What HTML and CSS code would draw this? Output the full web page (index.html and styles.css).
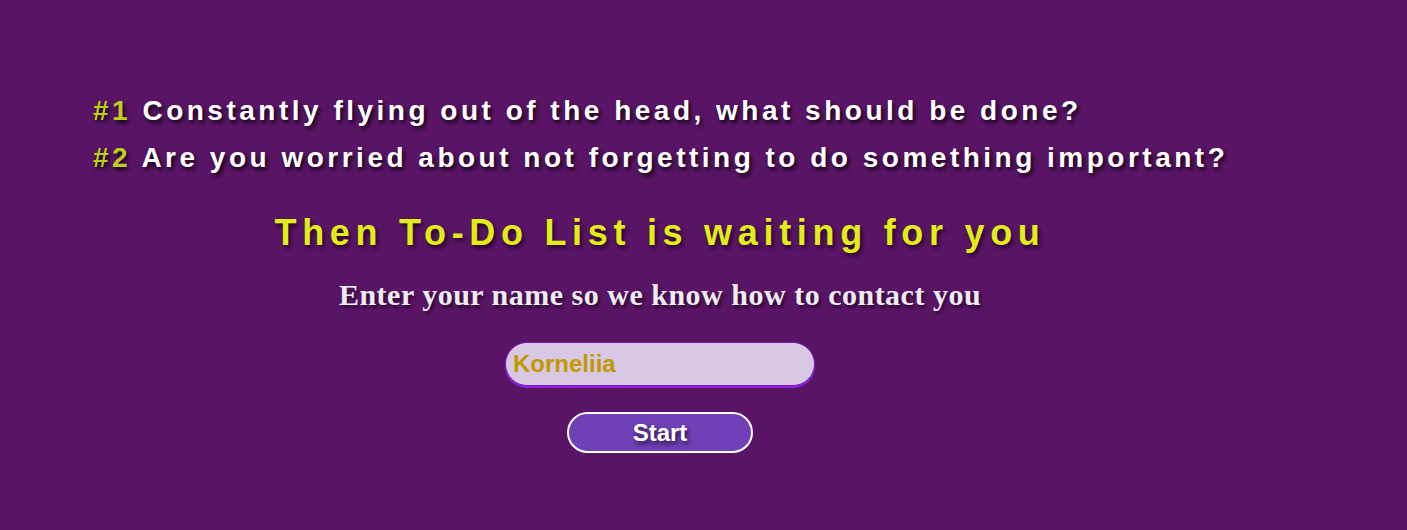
FILE: index.html
```html
<!DOCTYPE html>
<html lang="en">
<head>
<meta charset="utf-8">
<title>To-Do List</title>
<link rel="stylesheet" href="styles.css">
</head>
<body>
  <div class="questions">
    <p class="question"><span class="num">#1</span> Constantly flying out of the head, what should be done?</p>
    <p class="question"><span class="num">#2</span> Are you worried about not forgetting to do something important?</p>
  </div>
  <div class="main">
    <h1 class="title">Then To-Do List is waiting for you</h1>
    <h2 class="subtitle">Enter your name so we know how to contact you</h2>
    <input class="name-input" type="text" value="Korneliia">
    <button class="start-btn" type="button">Start</button>
  </div>
</body>
</html>
```
FILE: styles.css
```css
html, body {
  margin: 0;
  padding: 0;
}
body {
  background: #5a1466;
  font-family: "Liberation Sans", Arial, sans-serif;
  height: 530px;
  overflow: hidden;
}
.questions {
  padding: 87px 0 0 93px;
}
.question {
  margin: 0;
  font-size: 28px;
  line-height: 47px;
  font-weight: bold;
  letter-spacing: 3.5px;
  color: #ffffff;
  text-shadow: 2px 3px 4px rgba(0, 0, 0, 0.85);
  white-space: nowrap;
}
.num {
  color: #bccf1a;
}
.main {
  width: 1320px;
  display: flex;
  flex-direction: column;
  align-items: center;
  text-align: center;
}
.title {
  margin: 31px 0 0 0;
  font-size: 36px;
  line-height: normal;
  font-weight: bold;
  letter-spacing: 5.7px;
  color: #e2ec17;
  text-shadow: 2px 3px 4px rgba(20, 0, 30, 0.8);
  white-space: nowrap;
}
.subtitle {
  margin: 24px 0 0 0;
  font-family: "Liberation Serif", "Times New Roman", serif;
  font-size: 30px;
  line-height: normal;
  font-weight: bold;
  letter-spacing: 0.5px;
  color: #eeecf2;
  text-shadow: 2px 3px 3px rgba(0, 0, 0, 0.55);
  white-space: nowrap;
}
.name-input {
  margin-top: 30px;
  box-sizing: border-box;
  width: 310px;
  height: 44px;
  padding: 0 7px;
  border: 1px solid #7a1cc2;
  border-radius: 22px;
  box-shadow: 0 2px 0 #8a22dd;
  background: #d9c8e3;
  color: #c09a00;
  font-family: "Liberation Sans", Arial, sans-serif;
  font-size: 24px;
  font-weight: bold;
  outline: none;
}
.start-btn {
  margin-top: 26px;
  box-sizing: border-box;
  width: 186px;
  height: 41px;
  border: 2px solid #ffffff;
  border-radius: 21px;
  background: #6f3fb5;
  color: #ffffff;
  font-family: "Liberation Sans", Arial, sans-serif;
  font-size: 24px;
  font-weight: bold;
  text-shadow: 2px 3px 4px rgba(0, 0, 0, 0.6);
  padding: 0;
  cursor: pointer;
}
```
